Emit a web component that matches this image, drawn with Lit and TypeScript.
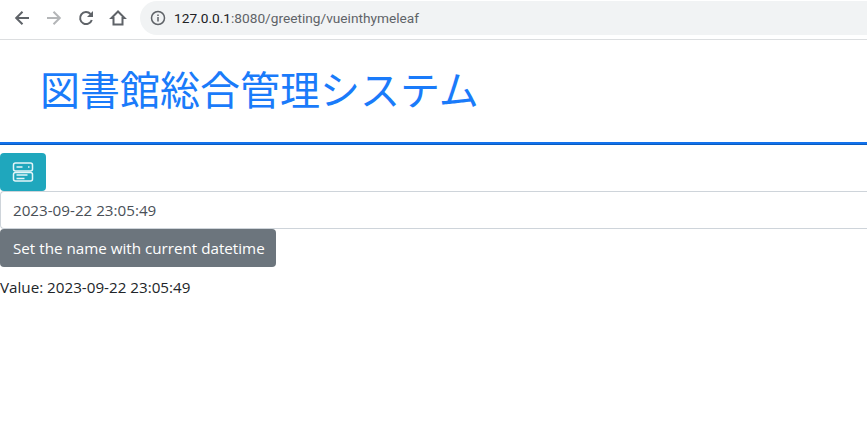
import { LitElement, html, css } from "lit";
import { customElement } from "lit/decorators.js";

@customElement("app-root")
export class AppRoot extends LitElement {
  static styles = css`
    :host { display: block; width: 867px; height: 428px; overflow: hidden; background: #fff; font-family: "Open Sans", "Noto Sans", sans-serif; color: #212529; }
    .toolbar { display: flex; align-items: center; height: 39px; border-bottom: 1px solid #dcdee0; box-sizing: content-box; padding-left: 12px; }
    .navs { display: flex; gap: 12px; align-items: center; margin-top: -3px; }
    .navs svg { display: block; width: 20px; height: 20px; }
    .omni { margin-left: 12px; margin-top: -3px; flex: 1; height: 34px; border-radius: 17px 0 0 17px; background: #f1f3f4; display: flex; align-items: center; padding-left: 10px; gap: 8px; font-family: "Roboto", sans-serif; font-size: 13.7px; color: #5f6368; }
    .omni svg { width: 16px; height: 16px; display: block; }
    .host { color: #202124; }
    .header { height: 102px; box-sizing: content-box; border-bottom: 1px solid #0a5cc0; box-shadow: inset 0 -2px 0 #1272ec; padding-bottom: 2px; padding-left: 40px; display: flex; align-items: flex-start; }
    h1 { margin: 18px 0 0; font-family: "Noto Sans CJK JP", sans-serif; font-weight: 400; font-size: 40px; line-height: 60px; color: #1a7bfa; }
    .body { padding-top: 8px; }
    button { display: block; height: 38px; border: 1px solid transparent; border-radius: 4px; padding: 0 12px; font: inherit; font-size: 15.2px; color: #fff; white-space: nowrap; }
    .info { width: 46px; background: #1fa7bd; display: flex; align-items: center; justify-content: center; padding: 0; }
    .info svg { width: 22px; height: 22px; }
    .input { box-sizing: border-box; height: 38px; border: 1px solid #ced4da; border-right: 0; border-radius: 4px 0 0 4px; padding: 0 12px; display: flex; align-items: center; font-size: 15.2px; color: #495057; }
    .sec { background: #6c757d; width: 276px; text-align: left; }
    .value { margin-top: 8px; line-height: 24px; font-size: 15.2px; }
  `;

  render() {
    return html`
      <div class="toolbar">
        <div class="navs">
          <svg viewBox="0 0 20 20" fill="none" stroke="#5f6368" stroke-width="2"><path d="M17 10H4.500M10.500 3.700 4.200 10l6.300 6.300" /></svg>
          <svg viewBox="0 0 20 20" fill="none" stroke="#b4b6b8" stroke-width="2"><path d="M3 10h12.500M9.500 3.700 15.800 10l-6.300 6.300" /></svg>
          <svg viewBox="0 0 20 20" fill="none" stroke="#5f6368" stroke-width="2"><path d="M15.800 12a6 6 0 1 1-1.300-6" /><path d="M17 3v6h-6z" fill="#5f6368" stroke="none" /></svg>
          <svg viewBox="0 0 20 20" fill="none" stroke="#5f6368" stroke-width="2"><path d="M10 3.500 3.500 10H5.500v6.500h9V10h2z" /></svg>
        </div>
        <div class="omni">
          <svg viewBox="0 0 16 16" fill="none" stroke="#5f6368"><circle cx="8" cy="8" r="6.500" stroke-width="1.500" /><path d="M8 7v4.500M8 4.500v1.500" stroke-width="1.500" /></svg>
          <span><span class="host">127.0.0.1</span>:8080/greeting/vueinthymeleaf</span>
        </div>
      </div>
      <div class="header"><h1>図書館総合管理システム</h1></div>
      <div class="body">
        <button class="info" aria-label="server">
          <svg viewBox="0 0 22 22" fill="none" stroke="#e4f5f8" stroke-width="1.500">
            <rect x="1.500" y="2" width="19" height="8" rx="2" />
            <rect x="1.500" y="11.500" width="19" height="8.500" rx="2" />
            <path d="M4.500 6h6M16 6h1.500M4.500 14h11M4.500 17.500h8" />
          </svg>
        </button>
        <div class="input">2023-09-22 23:05:49</div>
        <button class="sec">Set the name with current datetime</button>
        <div class="value">Value: 2023-09-22 23:05:49</div>
      </div>
    `;
  }
}
